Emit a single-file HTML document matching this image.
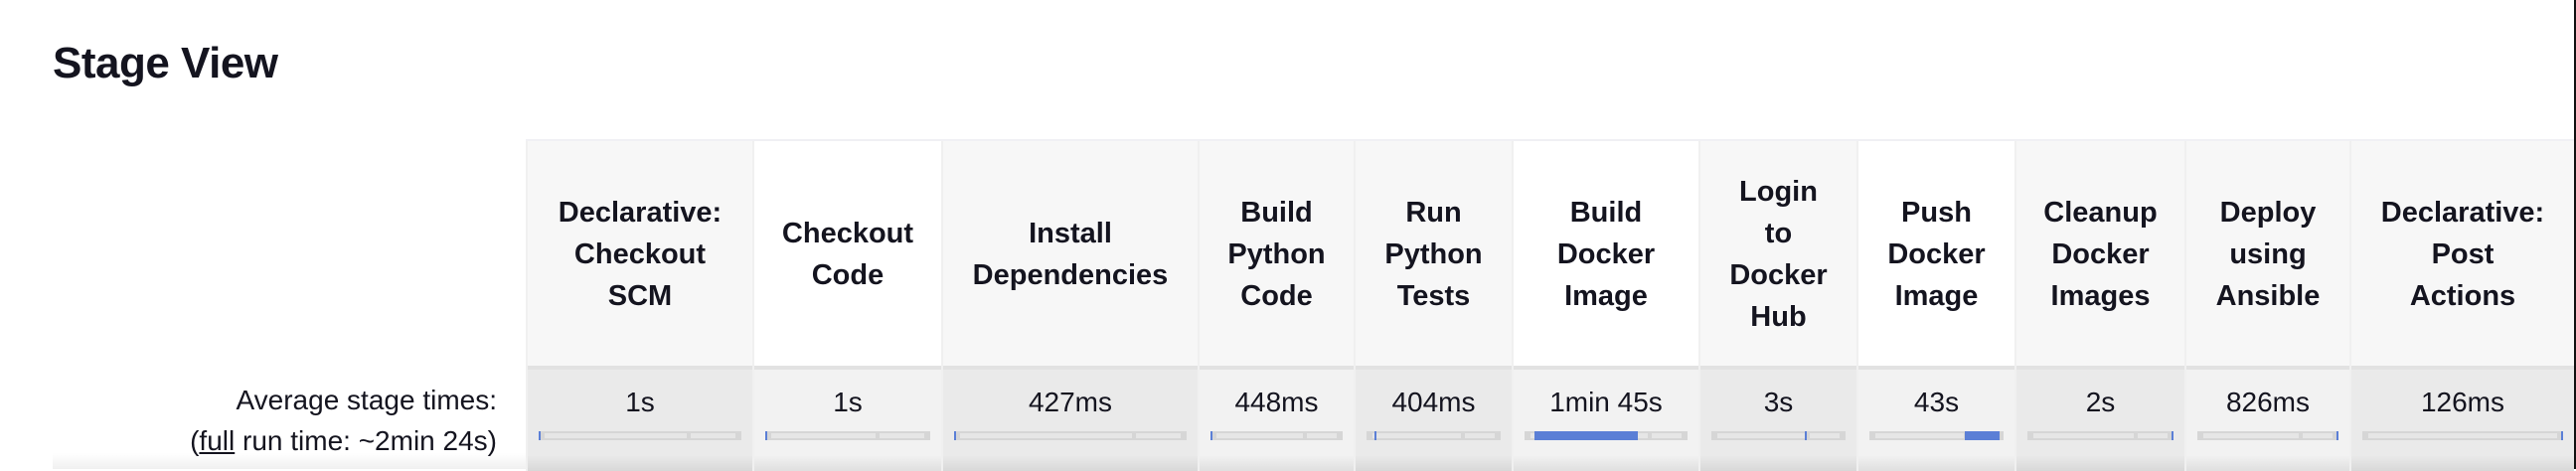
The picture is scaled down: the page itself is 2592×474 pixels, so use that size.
<!DOCTYPE html>
<html><head><meta charset="utf-8"><style>
*{margin:0;padding:0;box-sizing:border-box}
body{width:2592px;height:472px;overflow:hidden;background:#fff;font-family:"Liberation Sans",sans-serif;color:#14141f;position:relative}
h1{position:absolute;left:53px;top:39px;font-size:44px;font-weight:bold;letter-spacing:-0.5px}
.tbl{position:absolute;left:529px;top:140px;width:2061px;height:332px;border-top:2px solid #f0f0f4}
.col{position:absolute;top:0;height:332px;border-left:2px solid #f0f0f0}
.hd{position:absolute;left:0;right:0;top:0;height:226px;display:flex;align-items:center;justify-content:center;text-align:center;font-weight:bold;font-size:29px;line-height:42px;padding-top:2px}
.tm{position:absolute;left:0;right:0;top:226px;bottom:0;border-top:4px solid #e2e2e2;text-align:center;font-size:28px}
.tm .t{position:absolute;left:0;right:0;top:17px}
.bar{position:absolute;left:11px;right:11px;top:62px;height:9px;background:#d6d6d6}
.bar i{position:absolute;top:2px;bottom:2px;background:#e6e6e6}
.bar b{position:absolute;top:0;bottom:0;background:#5b7fd6}
.sh{position:absolute;left:0;right:0;bottom:0;height:16px;background:linear-gradient(#00000000,#00000014)}
.lbl{position:absolute;right:2092px;font-size:28px;text-align:right;white-space:nowrap}
.edge{position:absolute;right:0;top:0;width:2px;height:472px;background:#111}
.lsh{position:absolute;left:53px;width:476px;top:456px;height:16px;background:linear-gradient(#00000000,#0000000f)}
</style></head><body>
<h1>Stage View</h1>
<div class="lbl" style="top:387px">Average stage times:</div>
<div class="lbl" style="top:428px">(<u>full</u> run time: ~2min 24s)</div>
<div class="lsh"></div>
<div class="tbl">
<div class="col" style="left:0;width:228px;background:#f7f7f7"><div class="hd">Declarative:<br>Checkout<br>SCM</div><div class="tm" style="background:#eaeaea"><div class="t">1s</div><div class="bar"><i style="left:6px;right:55px"></i><i style="right:6px;width:45px"></i><b style="left:0;width:2px"></b></div><div class="sh"></div></div></div>
<div class="col" style="left:228px;width:190px;background:#fff"><div class="hd">Checkout<br>Code</div><div class="tm" style="background:#f2f2f2"><div class="t">1s</div><div class="bar"><i style="left:6px;right:55px"></i><i style="right:6px;width:45px"></i><b style="left:0;width:2px"></b></div><div class="sh"></div></div></div>
<div class="col" style="left:418px;width:258px;background:#f7f7f7"><div class="hd">Install<br>Dependencies</div><div class="tm" style="background:#eaeaea"><div class="t">427ms</div><div class="bar"><i style="left:6px;right:55px"></i><i style="right:6px;width:45px"></i><b style="left:0;width:2px"></b></div><div class="sh"></div></div></div>
<div class="col" style="left:676px;width:157px;background:#f7f7f7"><div class="hd">Build<br>Python<br>Code</div><div class="tm" style="background:#f2f2f2"><div class="t">448ms</div><div class="bar"><i style="left:6px;right:40px"></i><i style="right:6px;width:30px"></i><b style="left:0;width:2px"></b></div><div class="sh"></div></div></div>
<div class="col" style="left:833px;width:159px;background:#f7f7f7"><div class="hd">Run<br>Python<br>Tests</div><div class="tm" style="background:#eaeaea"><div class="t">404ms</div><div class="bar"><i style="left:6px;right:40px"></i><i style="right:6px;width:30px"></i><b style="left:8px;width:2px"></b></div><div class="sh"></div></div></div>
<div class="col" style="left:992px;width:188px;background:#fff"><div class="hd">Build<br>Docker<br>Image</div><div class="tm" style="background:#f2f2f2"><div class="t">1min 45s</div><div class="bar"><i style="left:6px;right:40px"></i><i style="right:6px;width:30px"></i><b style="left:10px;width:104px"></b></div><div class="sh"></div></div></div>
<div class="col" style="left:1180px;width:159px;background:#f7f7f7"><div class="hd">Login<br>to<br>Docker<br>Hub</div><div class="tm" style="background:#eaeaea"><div class="t">3s</div><div class="bar"><i style="left:6px;right:40px"></i><i style="right:6px;width:30px"></i><b style="left:94px;width:2px"></b></div><div class="sh"></div></div></div>
<div class="col" style="left:1339px;width:159px;background:#fff"><div class="hd">Push<br>Docker<br>Image</div><div class="tm" style="background:#f2f2f2"><div class="t">43s</div><div class="bar"><i style="left:6px;right:40px"></i><i style="right:6px;width:30px"></i><b style="left:96px;width:35px"></b></div><div class="sh"></div></div></div>
<div class="col" style="left:1498px;width:171px;background:#f7f7f7"><div class="hd">Cleanup<br>Docker<br>Images</div><div class="tm" style="background:#eaeaea"><div class="t">2s</div><div class="bar"><i style="left:6px;right:40px"></i><i style="right:6px;width:30px"></i><b style="right:0;width:2px"></b></div><div class="sh"></div></div></div>
<div class="col" style="left:1669px;width:166px;background:#f7f7f7"><div class="hd">Deploy<br>using<br>Ansible</div><div class="tm" style="background:#f2f2f2"><div class="t">826ms</div><div class="bar"><i style="left:6px;right:40px"></i><i style="right:6px;width:30px"></i><b style="right:0;width:2px"></b></div><div class="sh"></div></div></div>
<div class="col" style="left:1835px;width:226px;background:#f7f7f7"><div class="hd">Declarative:<br>Post<br>Actions</div><div class="tm" style="background:#eaeaea"><div class="t">126ms</div><div class="bar"><i style="left:6px;right:60px"></i><i style="right:6px;width:55px"></i><b style="right:0;width:2px"></b></div><div class="sh"></div></div></div>
</div>
<div class="edge"></div>
</body></html>
